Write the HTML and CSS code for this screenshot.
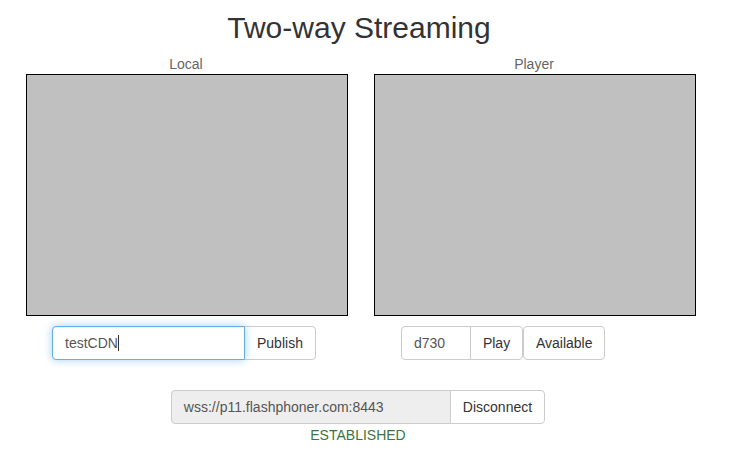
FILE: index.html
```html
<!DOCTYPE html>
<html>
<head>
<meta charset="utf-8">
<link rel="stylesheet" href="styles.css">
</head>
<body>
<h1 class="title">Two-way Streaming</h1>
<div class="videos">
  <div class="col">
    <div class="label">Local</div>
    <div class="video"></div>
  </div>
  <div class="col">
    <div class="label">Player</div>
    <div class="video"></div>
  </div>
</div>
<div class="controls">
  <div class="group group-left">
    <div class="input input-focus input-wide">testCDN<span class="caret"></span></div>
    <div class="btn btn-last">Publish</div>
  </div>
  <div class="group group-right">
    <div class="input input-small">d730</div>
    <div class="btn btn-mid">Play</div>
    <div class="btn btn-solo">Available</div>
  </div>
</div>
<div class="connect">
  <div class="group">
    <div class="input input-readonly">wss://p11.flashphoner.com:8443</div>
    <div class="btn btn-last">Disconnect</div>
  </div>
  <div class="status">ESTABLISHED</div>
</div>
</body>
</html>
```
FILE: styles.css
```css
* { box-sizing: border-box; }
body {
  margin: 0;
  font-family: "Liberation Sans", Arial, sans-serif;
  font-size: 14px;
  color: #333;
  background: #fff;
}
.title {
  margin: 0;
  padding-top: 8px;
  padding-right: 13px;
  font-size: 30px;
  font-weight: 400;
  line-height: 40px;
  text-align: center;
  color: #333;
}
.videos {
  display: flex;
  gap: 26px;
  padding-left: 26px;
  margin-top: 8px;
}
.col {
  display: flex;
  flex-direction: column;
  align-items: center;
  width: 322px;
}
.label {
  color: #666;
  font-size: 14px;
  line-height: 16px;
  margin-bottom: 2px;
  padding-right: 2px;
}
.video {
  width: 322px;
  height: 242px;
  background: #c0c0c0;
  border: 1px solid #000;
}
.controls {
  display: flex;
  margin-top: 10px;
}
.group { display: flex; }
.group-left { margin-left: 52px; }
.group-right { margin-left: 85px; }
.input, .btn {
  height: 34px;
  line-height: 20px;
  padding: 6px 12px;
  border: 1px solid #ccc;
  font-size: 14px;
  color: #333;
  background: #fff;
  white-space: nowrap;
}
.input {
  border-radius: 4px 0 0 4px;
  color: #555;
}
.input-wide { width: 193px; }
.input-small { width: 70px; }
.input-focus {
  border-color: #66afe9;
  box-shadow: inset 0 1px 1px rgba(0,0,0,.075), 0 0 8px rgba(102,175,233,.6);
  position: relative;
  z-index: 1;
}
.caret {
  display: inline-block;
  width: 1px;
  height: 16px;
  background: #333;
  vertical-align: -3px;
}
.btn {
  margin-left: -1px;
}
.btn-last { border-radius: 0 4px 4px 0; }
.btn-mid { border-radius: 0 4px 4px 0; width: 53px; text-align: center; }
.btn-solo { border-radius: 4px; margin-left: 0; }
.input-readonly {
  background: #eee;
  width: 280px;
}
.connect {
  display: flex;
  flex-direction: column;
  align-items: center;
  margin-top: 30px;
  padding-right: 15px;
}
.status {
  color: #3c763d;
  line-height: 20px;
  margin-top: 1px;
}
```
